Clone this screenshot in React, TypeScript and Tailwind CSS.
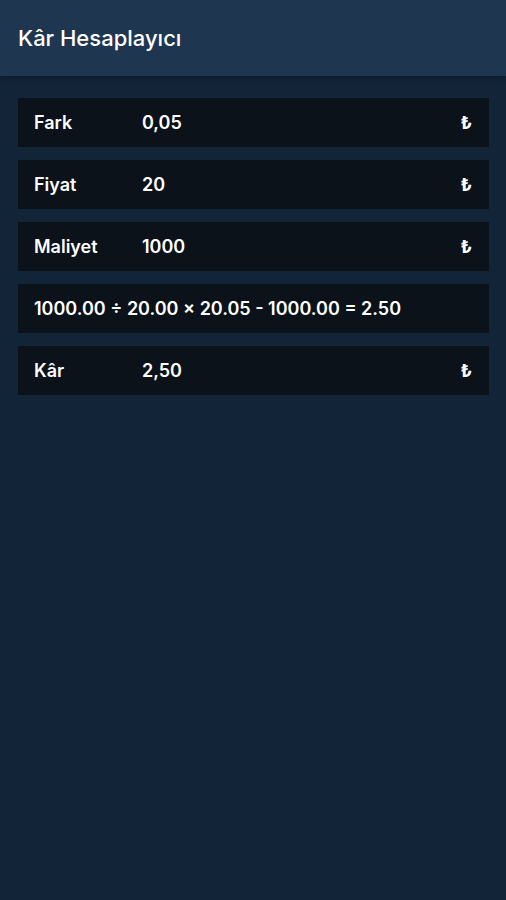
import React from "react";

function Row({ label, value }: { label: string; value: string }) {
  return (
    <div className="flex h-[49px] items-center bg-[#0b1219] pl-4 pr-[17px]">
      <div className="w-[108px] text-white">{label}</div>
      <div className="flex-1 text-white">{value}</div>
      <div className="text-white font-bold">₺</div>
    </div>
  );
}

export default function App() {
  return (
    <div
      className="flex min-h-[900px] w-full flex-col bg-[#112438] text-[18px] font-semibold"
      style={{ fontFamily: 'Inter, "Open Sans", "Liberation Sans", sans-serif' }}
    >
      <div className="flex h-[76px] items-center bg-[#1f3650] px-[18px] shadow-[0_2px_6px_rgba(0,0,0,0.25)]">
        <h1 className="text-[22px] font-medium text-white">Kâr Hesaplayıcı</h1>
      </div>
      <div className="flex flex-col gap-[13px] pl-[18px] pr-[17px] pt-[22px]">
        <Row label="Fark" value="0,05" />
        <Row label="Fiyat" value="20" />
        <Row label="Maliyet" value="1000" />
        <div className="flex h-[49px] items-center bg-[#0b1219] px-4 text-white">
          1000.00 ÷ 20.00 × 20.05 - 1000.00 = 2.50
        </div>
        <Row label="Kâr" value="2,50" />
      </div>
    </div>
  );
}
